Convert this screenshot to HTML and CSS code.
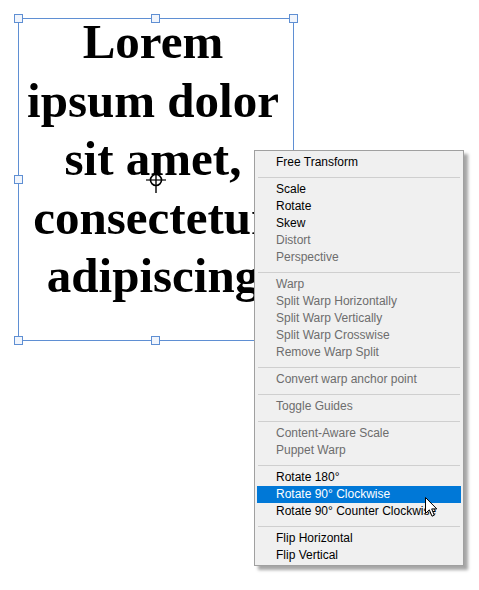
FILE: index.html
```html
<!DOCTYPE html>
<html>
<head>
<meta charset="utf-8">
<link rel="stylesheet" href="styles.css">
</head>
<body>
<div class="canvas">
  <div class="textbox">
    <div class="copy">Lorem<br>ipsum dolor<br>sit amet,<br>consectetur<br>adipiscing</div>
    <span class="handle h-tl"></span>
    <span class="handle h-tm"></span>
    <span class="handle h-tr"></span>
    <span class="handle h-ml"></span>
    <span class="handle h-mr"></span>
    <span class="handle h-bl"></span>
    <span class="handle h-bm"></span>
    <span class="handle h-br"></span>
    <svg class="pivot" width="26" height="28" viewBox="0 0 26 28">
      <circle cx="13" cy="13" r="5.5" fill="none" stroke="#000" stroke-width="1.6"/>
      <line x1="3" y1="13" x2="23" y2="13" stroke="#000" stroke-width="1.2"/>
      <line x1="13" y1="1" x2="13" y2="26" stroke="#000" stroke-width="1.4"/>
    </svg>
  </div>

  <div class="menu">
    <div class="item">Free Transform</div>
    <div class="sep"></div>
    <div class="item">Scale</div>
    <div class="item">Rotate</div>
    <div class="item">Skew</div>
    <div class="item off">Distort</div>
    <div class="item off">Perspective</div>
    <div class="sep"></div>
    <div class="item off">Warp</div>
    <div class="item off">Split Warp Horizontally</div>
    <div class="item off">Split Warp Vertically</div>
    <div class="item off">Split Warp Crosswise</div>
    <div class="item off">Remove Warp Split</div>
    <div class="sep"></div>
    <div class="item off">Convert warp anchor point</div>
    <div class="sep"></div>
    <div class="item off">Toggle Guides</div>
    <div class="sep"></div>
    <div class="item off">Content-Aware Scale</div>
    <div class="item off">Puppet Warp</div>
    <div class="sep"></div>
    <div class="item">Rotate 180°</div>
    <div class="item active">Rotate 90° Clockwise</div>
    <div class="item">Rotate 90° Counter Clockwise</div>
    <div class="sep"></div>
    <div class="item">Flip Horizontal</div>
    <div class="item">Flip Vertical</div>
  </div>

  <svg class="cursor" width="14" height="21" viewBox="0 0 14 21">
    <path d="M0.5,0.5 L0.5,16.5 L4.3,12.8 L7,19.2 L9.3,18.2 L6.7,11.9 L11.8,11.9 Z" fill="#fff" stroke="#000" stroke-width="1" stroke-linejoin="miter"/>
  </svg>
</div>
</body>
</html>
```

FILE: styles.css
```css
html, body {
  margin: 0;
  padding: 0;
  background: #ffffff;
}

.canvas {
  position: relative;
  width: 479px;
  height: 590px;
  overflow: hidden;
  padding: 18px 0 0 18px;
  box-sizing: border-box;
}

.textbox {
  position: relative;
  width: 276px;
  height: 323px;
  box-sizing: border-box;
  border: 1px solid #5f8fd3;
}

.copy {
  margin-top: -6px;
  padding-right: 6px;
  font-family: "Liberation Serif", "Times New Roman", serif;
  font-weight: bold;
  font-size: 49px;
  line-height: 58.5px;
  color: #000;
  text-align: center;
  white-space: nowrap;
}

.handle {
  position: absolute;
  width: 9px;
  height: 9px;
  box-sizing: border-box;
  border: 1px solid #5f8fd3;
  background: #f1f5fc;
}
.h-tl { left: -5px; top: -5px; }
.h-tm { left: 132px; top: -5px; }
.h-tr { left: 270px; top: -5px; }
.h-ml { left: -5px; top: 156px; }
.h-mr { left: 270px; top: 156px; }
.h-bl { left: -5px; top: 317px; }
.h-bm { left: 132px; top: 317px; }
.h-br { left: 270px; top: 317px; }

.pivot {
  position: absolute;
  left: 124px;
  top: 148px;
}

.menu {
  position: absolute;
  left: 254px;
  top: 150px;
  width: 204px;
  padding: 3px 2px 1px 2px;
  border: 1px solid #a0a0a0;
  background: #f0f0f0;
  box-shadow: 4px 4px 3px rgba(0, 0, 0, 0.35);
  font-family: "Liberation Sans", Arial, sans-serif;
  font-size: 12px;
}

.item {
  height: 17px;
  line-height: 17px;
  padding-left: 19px;
  color: #000;
  white-space: nowrap;
}
.item.off {
  color: #6d6d6d;
}
.item.active {
  background: #0078d7;
  color: #fff;
}

.sep {
  height: 1px;
  margin: 6px 1px 3px 1px;
  background: #cfcfcf;
}

.cursor {
  position: absolute;
  left: 425px;
  top: 497px;
}
```
